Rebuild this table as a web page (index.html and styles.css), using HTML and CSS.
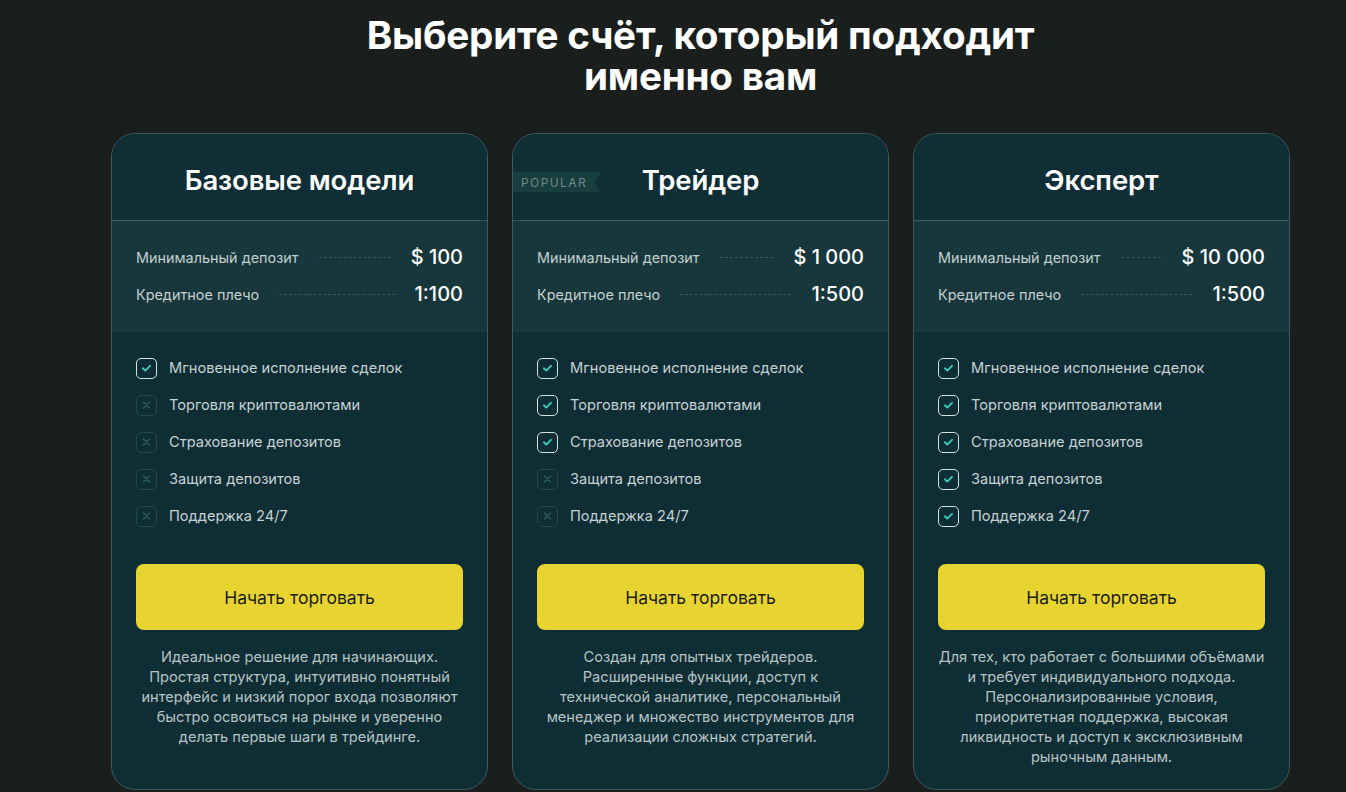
FILE: index.html
```html
<!DOCTYPE html>
<html lang="ru">
<head>
<meta charset="utf-8">
<title>Выберите счёт</title>
<link rel="stylesheet" href="styles.css">
</head>
<body>
<main class="page">
  <h1 class="heading">Выберите счёт, который подходит<br>именно вам</h1>
  <div class="plans">
    <section class="card">
      <header class="card-head"><h2 class="card-title">Базовые модели</h2></header>
      <div class="stats">
        <div class="stat"><span class="stat-label">Минимальный депозит</span><span class="dots"></span><span class="stat-value">$ 100</span></div>
        <div class="stat"><span class="stat-label">Кредитное плечо</span><span class="dots"></span><span class="stat-value">1:100</span></div>
      </div>
      <div class="card-body">
        <ul class="features">
          <li class="feature on"><span class="box"><svg viewBox="0 0 20 20"><path d="M6.2 10.3l2.5 2.4 5-5"/></svg></span>Мгновенное исполнение сделок</li>
          <li class="feature off"><span class="box"><svg viewBox="0 0 20 20"><path d="M6.8 6.8l6.4 6.4M13.2 6.8l-6.4 6.4"/></svg></span>Торговля криптовалютами</li>
          <li class="feature off"><span class="box"><svg viewBox="0 0 20 20"><path d="M6.8 6.8l6.4 6.4M13.2 6.8l-6.4 6.4"/></svg></span>Страхование депозитов</li>
          <li class="feature off"><span class="box"><svg viewBox="0 0 20 20"><path d="M6.8 6.8l6.4 6.4M13.2 6.8l-6.4 6.4"/></svg></span>Защита депозитов</li>
          <li class="feature off"><span class="box"><svg viewBox="0 0 20 20"><path d="M6.8 6.8l6.4 6.4M13.2 6.8l-6.4 6.4"/></svg></span>Поддержка 24/7</li>
        </ul>
        <button class="cta">Начать торговать</button>
        <p class="desc">Идеальное решение для начинающих. Простая структура, интуитивно понятный интерфейс и низкий порог входа позволяют быстро освоиться на рынке и уверенно делать первые шаги в трейдинге.</p>
      </div>
    </section>

    <section class="card">
      <header class="card-head"><span class="badge">POPULAR</span><h2 class="card-title">Трейдер</h2></header>
      <div class="stats">
        <div class="stat"><span class="stat-label">Минимальный депозит</span><span class="dots"></span><span class="stat-value">$ 1 000</span></div>
        <div class="stat"><span class="stat-label">Кредитное плечо</span><span class="dots"></span><span class="stat-value">1:500</span></div>
      </div>
      <div class="card-body">
        <ul class="features">
          <li class="feature on"><span class="box"><svg viewBox="0 0 20 20"><path d="M6.2 10.3l2.5 2.4 5-5"/></svg></span>Мгновенное исполнение сделок</li>
          <li class="feature on"><span class="box"><svg viewBox="0 0 20 20"><path d="M6.2 10.3l2.5 2.4 5-5"/></svg></span>Торговля криптовалютами</li>
          <li class="feature on"><span class="box"><svg viewBox="0 0 20 20"><path d="M6.2 10.3l2.5 2.4 5-5"/></svg></span>Страхование депозитов</li>
          <li class="feature off"><span class="box"><svg viewBox="0 0 20 20"><path d="M6.8 6.8l6.4 6.4M13.2 6.8l-6.4 6.4"/></svg></span>Защита депозитов</li>
          <li class="feature off"><span class="box"><svg viewBox="0 0 20 20"><path d="M6.8 6.8l6.4 6.4M13.2 6.8l-6.4 6.4"/></svg></span>Поддержка 24/7</li>
        </ul>
        <button class="cta">Начать торговать</button>
        <p class="desc">Создан для опытных трейдеров. Расширенные функции, доступ к технической аналитике, персональный менеджер и множество инструментов для реализации сложных стратегий.</p>
      </div>
    </section>

    <section class="card">
      <header class="card-head"><h2 class="card-title">Эксперт</h2></header>
      <div class="stats">
        <div class="stat"><span class="stat-label">Минимальный депозит</span><span class="dots"></span><span class="stat-value">$ 10 000</span></div>
        <div class="stat"><span class="stat-label">Кредитное плечо</span><span class="dots"></span><span class="stat-value">1:500</span></div>
      </div>
      <div class="card-body">
        <ul class="features">
          <li class="feature on"><span class="box"><svg viewBox="0 0 20 20"><path d="M6.2 10.3l2.5 2.4 5-5"/></svg></span>Мгновенное исполнение сделок</li>
          <li class="feature on"><span class="box"><svg viewBox="0 0 20 20"><path d="M6.2 10.3l2.5 2.4 5-5"/></svg></span>Торговля криптовалютами</li>
          <li class="feature on"><span class="box"><svg viewBox="0 0 20 20"><path d="M6.2 10.3l2.5 2.4 5-5"/></svg></span>Страхование депозитов</li>
          <li class="feature on"><span class="box"><svg viewBox="0 0 20 20"><path d="M6.2 10.3l2.5 2.4 5-5"/></svg></span>Защита депозитов</li>
          <li class="feature on"><span class="box"><svg viewBox="0 0 20 20"><path d="M6.2 10.3l2.5 2.4 5-5"/></svg></span>Поддержка 24/7</li>
        </ul>
        <button class="cta">Начать торговать</button>
        <p class="desc">Для тех, кто работает с большими объёмами и требует индивидуального подхода. Персонализированные условия, приоритетная поддержка, высокая ликвидность и доступ к эксклюзивным рыночным данным.</p>
      </div>
    </section>
  </div>
</main>
</body>
</html>
```

FILE: styles.css
```css
* { box-sizing: border-box; }
html, body { margin: 0; padding: 0; }
body {
  background: #1a1f1e;
  font-family: Inter, "Noto Sans", sans-serif;
  color: #ffffff;
  overflow: hidden;
}
.page {
  width: 1179px;
  margin-left: 111px;
  padding-top: 15px;
}
.heading {
  margin: 0;
  text-align: center;
  font-size: 38.6px;
  line-height: 41px;
  font-weight: 700;
  letter-spacing: -0.2px;
  color: #ffffff;
}
.plans {
  margin-top: 36px;
  display: grid;
  grid-template-columns: repeat(3, 377px);
  gap: 24px;
}
.card {
  position: relative;
  height: 657px;
  background: #0f2d35;
  border: 1px solid #3d5a5e;
  border-radius: 24px;
  overflow: hidden;
  display: flex;
  flex-direction: column;
}
.card-head {
  position: relative;
  height: 87px;
  display: flex;
  align-items: center;
  justify-content: center;
  padding-top: 6px;
  border-bottom: 1px solid #3a5a5e;
  background: #0f2e36;
}
.card-title {
  margin: 0;
  font-size: 27.5px;
  font-weight: 600;
  letter-spacing: -0.1px;
}
.badge {
  position: absolute;
  left: 0;
  top: 38px;
  width: 88px;
  height: 20px;
  padding-left: 8px;
  display: flex;
  align-items: center;
  font-size: 12px;
  letter-spacing: 1.4px;
  color: #6e8886;
  background: #173f3f;
  clip-path: polygon(0 0, 100% 0, 93% 50%, 100% 100%, 0 100%);
}
.stats {
  background: #17373c;
  height: 111px;
  padding: 24px 24px 0 24px;
  display: flex;
  flex-direction: column;
  gap: 13px;
}
.stat {
  display: flex;
  align-items: center;
  height: 24px;
}
.stat-label {
  font-size: 14.4px;
  color: #c3cfcf;
}
.dots {
  flex: 1;
  margin: 0 20px;
  border-top: 1px dashed #2e5a5c;
}
.stat-value {
  font-size: 20px;
  font-weight: 500;
  color: #ffffff;
}
.card-body {
  flex: 1;
  padding: 25px 24px 0 24px;
}
.features {
  list-style: none;
  margin: 0;
  padding: 0;
  display: flex;
  flex-direction: column;
  gap: 15px;
}
.feature {
  display: flex;
  align-items: center;
  gap: 12px;
  height: 22px;
  font-size: 14.6px;
  color: #c6d2d2;
}
.box {
  width: 21px;
  height: 21px;
  border-radius: 5px;
  display: flex;
  align-items: center;
  justify-content: center;
  flex: none;
}
.box svg {
  width: 20px;
  height: 20px;
  fill: none;
  stroke-linecap: round;
  stroke-linejoin: round;
}
.on .box { border: 1.5px solid #d6e2e0; }
.on .box svg { stroke: #3ccab9; stroke-width: 2; }
.off .box { border: 1.5px solid #1d4a4c; }
.off .box svg { stroke: #2a5c5c; stroke-width: 1.6; }
.cta {
  display: block;
  width: 100%;
  height: 66px;
  margin-top: 37px;
  border: none;
  border-radius: 8px;
  background: #e8d430;
  color: #1b1d1a;
  font-family: inherit;
  font-size: 17.5px;
  font-weight: 400;
}
.desc {
  margin: 17px 0 0;
  padding: 0;
  text-align: center;
  font-size: 14.6px;
  line-height: 20px;
  color: #b7c4c4;
}
```
